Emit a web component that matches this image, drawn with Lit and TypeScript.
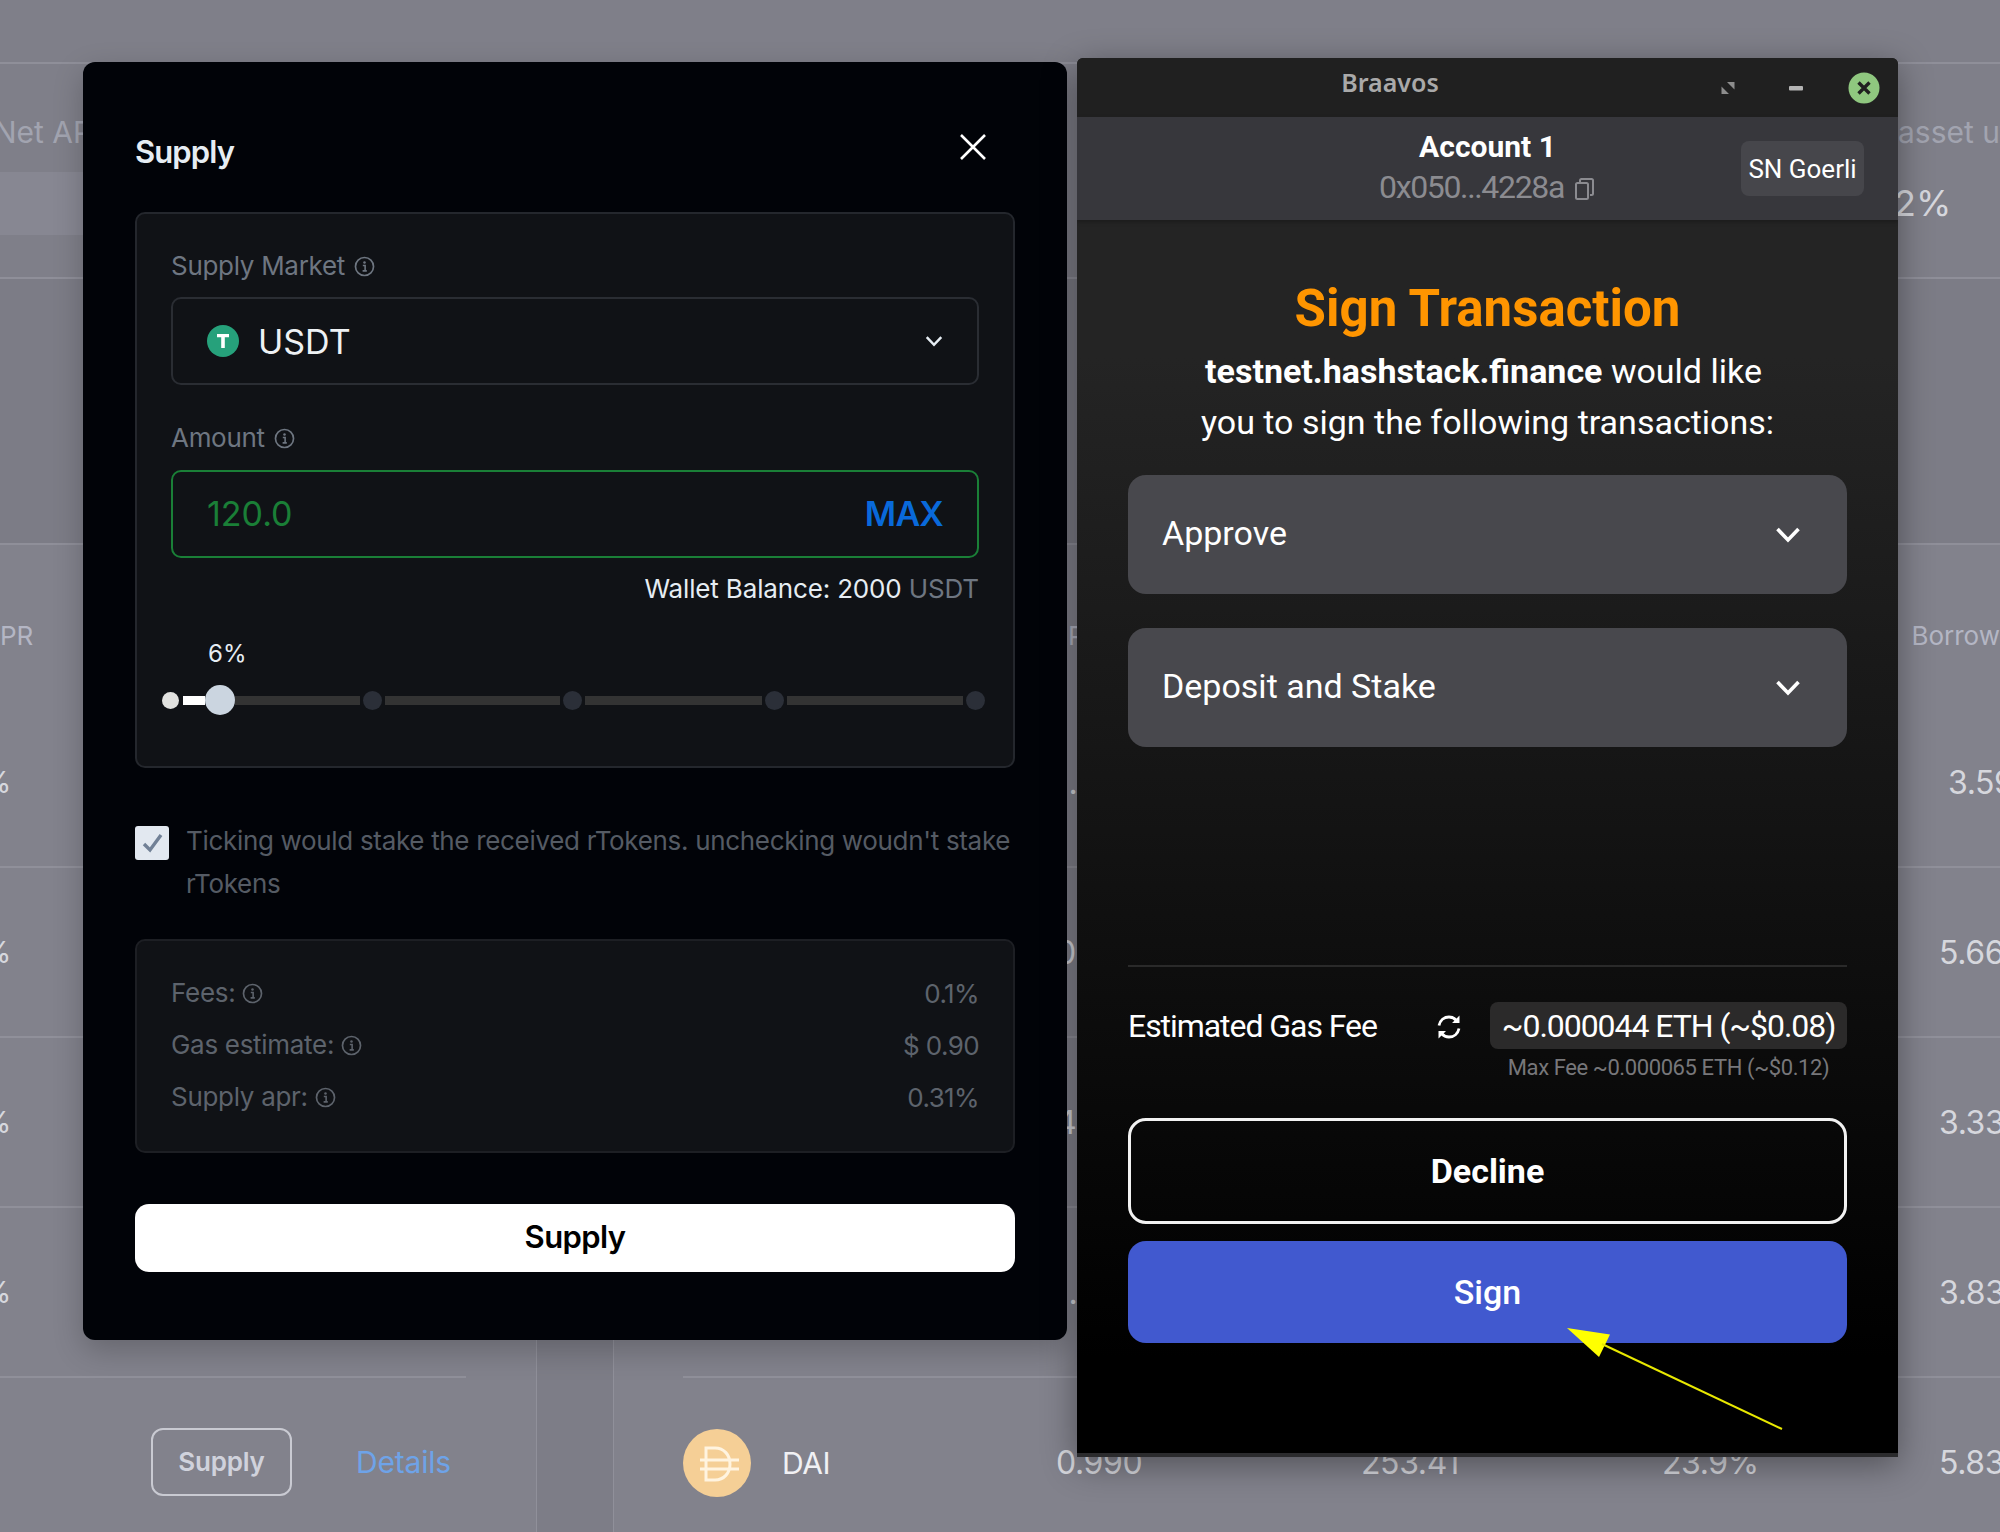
import { LitElement, css, html, svg } from "lit";
import { customElement } from "lit/decorators.js";

const infoIcon = html`<svg class="info" viewBox="0 0 20 20">
  <circle cx="10" cy="10" r="8.6" fill="none" stroke="currentColor" stroke-width="1.6"></circle>
  <circle cx="10" cy="6.2" r="1.2" fill="currentColor"></circle>
  <path d="M8.4 9h2.2v5M8.2 14.2h4" fill="none" stroke="currentColor" stroke-width="1.5"></path>
</svg>`;

const chevron = html`<svg class="chev" viewBox="0 0 26 17">
  <path d="M2.5 3 13 14 23.5 3" fill="none" stroke="currentColor" stroke-width="3.6"></path>
</svg>`;

const sliderSegments = [125, 175, 177, 176];

@customElement("app-root")
export class AppRoot extends LitElement {
  static styles = css`
    :host {
      display: block;
      position: relative;
      width: 2000px;
      height: 1532px;
      overflow: hidden;
      background: #82828c;
      font-family: Inter, "Liberation Sans", sans-serif;
    }

    /* dimmed dashboard behind the dialogs */
    .page {
      display: flex;
      flex-direction: column;
      height: 100%;
      color: #d6d7dd;
    }
    .top-strip {
      height: 62px;
      flex: none;
      background: #7f7f89;
      border-bottom: 2px solid #8f8f99;
    }
    .stats {
      height: 213px;
      flex: none;
      display: flex;
      justify-content: space-between;
      background: #7f7f89;
      border-bottom: 2px solid #8f8f99;
    }
    .stat-left {
      width: 90px;
      overflow: hidden;
      padding-top: 50px;
      white-space: nowrap;
      font-size: 30px;
      line-height: 36px;
      color: #a2a4b0;
    }
    .stat-left span {
      display: block;
      margin-left: -6px;
    }
    .skeleton {
      height: 63px;
      margin-top: 22px;
      background: #878792;
    }
    .stat-right {
      width: 102px;
      overflow: hidden;
      padding-top: 50px;
      white-space: nowrap;
      font-size: 30px;
      line-height: 36px;
      color: #a2a4b0;
    }
    .stat-value {
      margin: 30px 0 0 -4px;
      font-size: 36px;
      line-height: 46px;
      color: #d6d7dd;
    }
    .band {
      height: 264px;
      flex: none;
      background: #7c7c86;
      border-bottom: 2px solid #8f8f99;
    }
    .tables {
      flex: 1;
      display: flex;
    }
    .left-table {
      width: 536px;
      flex: none;
      border-right: 1px solid #90909a;
      overflow: hidden;
    }
    .gutter {
      width: 76px;
      flex: none;
      background: #7d7d87;
    }
    .right-table {
      flex: 1;
      border-left: 1px solid #90909a;
      padding-left: 69px;
      overflow: hidden;
    }
    .head {
      height: 153px;
      padding-top: 73px;
      box-sizing: border-box;
      font-size: 26px;
      line-height: 36px;
      color: #b4b6c4;
      white-space: nowrap;
    }
    .left-row {
      height: 170px;
      width: 466px;
      box-sizing: border-box;
      border-bottom: 2px solid #90909a;
      display: flex;
      align-items: center;
      font-size: 30px;
    }
    .clip-pct {
      margin-left: -18px;
      color: #d6d7dd;
    }
    .head .clip-pct {
      color: #b4b6c4;
    }
    .action-row {
      height: 154px;
      padding: 50px 0 0 151px;
      box-sizing: border-box;
      display: flex;
    }
    .ghost-btn {
      width: 141px;
      height: 68px;
      padding-bottom: 2px;
      box-sizing: border-box;
      border: 2px solid #c9cad2;
      border-radius: 12px;
      display: flex;
      align-items: center;
      justify-content: center;
      font-size: 26px;
      font-weight: 600;
      letter-spacing: -0.2px;
      color: #d0d2dc;
    }
    .details {
      margin-left: 64px;
      line-height: 68px;
      font-size: 30px;
      letter-spacing: -0.2px;
      color: #6ea3e8;
    }
    .right-row {
      height: 170px;
      box-sizing: border-box;
      border-bottom: 2px solid #90909a;
      display: grid;
      grid-template-columns: 373px 305px 301px 277px auto;
      align-items: center;
      font-size: 32px;
      letter-spacing: -0.4px;
      white-space: nowrap;
    }
    .right-row.last {
      border-bottom: 0;
      height: 168px;
      padding-bottom: 2px;
      align-items: start;
      padding-top: 51px;
    }
    .right-row.last > * {
      line-height: 68px;
    }
    .right-row .shift {
      padding-left: 9px;
    }
    .asset {
      display: flex;
      align-items: center;
      gap: 31px;
      font-size: 30px;
      color: #f1f1f4;
    }
    .asset svg {
      width: 68px;
      height: 68px;
    }
    .borrow-head {
      margin-left: 1158px;
    }
    .price-head {
      position: relative;
      left: 385px;
    }

    /* Supply dialog */
    .modal {
      position: absolute;
      left: 83px;
      top: 62px;
      width: 984px;
      height: 1278px;
      box-sizing: border-box;
      padding: 70px 52px 0;
      background: #010308;
      border-radius: 12px;
      box-shadow: 0 10px 30px rgba(0, 0, 0, 0.22);
      color: #e6edf3;
    }
    .modal-head {
      display: flex;
      align-items: center;
      justify-content: space-between;
      padding-right: 28px;
      font-size: 31px;
      font-weight: 600;
      letter-spacing: -0.9px;
      line-height: 40px;
    }
    .close {
      width: 28px;
      height: 28px;
      margin-top: -10px;
    }
    .card {
      margin-top: 40px;
      box-sizing: border-box;
      border: 2px solid #24272d;
      border-radius: 10px;
      background: #101216;
    }
    .market {
      height: 556px;
      padding: 34px 34px 0;
    }
    .label {
      display: flex;
      align-items: center;
      gap: 9px;
      font-size: 26px;
      letter-spacing: -0.3px;
      line-height: 36px;
      color: #6e7681;
    }
    .info {
      width: 21px;
      height: 21px;
      flex: none;
      color: #6e7681;
    }
    .select,
    .amount {
      height: 88px;
      box-sizing: border-box;
      border-radius: 10px;
      display: flex;
      align-items: center;
      padding: 0 34px;
      font-size: 34px;
    }
    .select {
      margin-top: 13px;
      border: 2px solid #2a2d33;
      gap: 19px;
      color: #eef1f4;
    }
    .select .coin {
      width: 32px;
      height: 32px;
    }
    .select .chev {
      margin-left: auto;
      width: 18px;
      height: 12px;
      color: #e6edf3;
    }
    .amount-label {
      margin-top: 35px;
    }
    .amount {
      margin-top: 14px;
      padding-bottom: 2px;
      border: 2px solid #1a7f37;
      justify-content: space-between;
      color: #1a7f37;
    }
    .max {
      font-weight: 600;
      letter-spacing: -0.8px;
      color: #0969da;
    }
    .balance {
      margin-top: 13px;
      text-align: right;
      font-size: 26px;
      letter-spacing: -0.15px;
      line-height: 36px;
    }
    .balance span {
      color: #6e7681;
    }
    .pct {
      margin: 32px 0 0 37px;
      font-size: 24px;
      line-height: 30px;
    }
    .slider {
      display: flex;
      align-items: center;
      height: 30px;
      margin: 16px -7px 0 -9px;
    }
    .slider .dot {
      width: 19px;
      height: 19px;
      flex: none;
      border-radius: 50%;
      background: #2b2f38;
    }
    .slider .dot.on {
      width: 17px;
      height: 17px;
      background: #e2e2e0;
      margin-right: 4px;
    }
    .slider .fill {
      width: 22px;
      height: 9px;
      background: #ffffff;
    }
    .slider .thumb {
      width: 30px;
      height: 30px;
      flex: none;
      border-radius: 50%;
      background: #cbd5e0;
    }
    .slider .seg {
      height: 9px;
      flex: none;
      background: #333333;
      margin-right: 3px;
    }
    .slider .dot + .seg {
      margin-left: 3px;
    }
    .stake {
      display: flex;
      gap: 17px;
      margin-top: 51px;
      font-size: 26px;
      letter-spacing: -0.32px;
      line-height: 43px;
      color: #555b64;
    }
    .check {
      width: 34px;
      height: 34px;
      flex: none;
      margin-top: 7px;
      border-radius: 3px;
      background: #e2e8f0;
      display: block;
    }
    .fees {
      margin-top: 34px;
      height: 214px;
      padding: 26px 34px 0;
      border-color: #1d1f24;
    }
    .fee-row {
      display: flex;
      justify-content: space-between;
      align-items: center;
      height: 52px;
      font-size: 26px;
      letter-spacing: -0.6px;
      color: #5d636c;
    }
    .fee-row .label {
      gap: 7px;
      color: #5d636c;
    }
    .fee-row .info {
      color: #5d636c;
    }
    .submit {
      margin-top: 51px;
      height: 68px;
      padding-bottom: 3px;
      box-sizing: border-box;
      border-radius: 14px;
      background: #ffffff;
      color: #000000;
      display: flex;
      align-items: center;
      justify-content: center;
      font-size: 31px;
      font-weight: 600;
      letter-spacing: -0.6px;
    }

    /* Braavos wallet popup */
    .wallet {
      position: absolute;
      left: 1077px;
      top: 58px;
      width: 821px;
      height: 1399px;
      box-sizing: border-box;
      display: flex;
      flex-direction: column;
      border-radius: 6px 6px 0 0;
      border-bottom: 4px solid #2b2b2d;
      box-shadow: 0 8px 34px rgba(0, 0, 0, 0.38);
      background: linear-gradient(#242424 300px, #000000 1300px);
      font-family: Roboto, "Liberation Sans", sans-serif;
      color: #ffffff;
      overflow: hidden;
    }
    .titlebar {
      height: 59px;
      flex: none;
      position: relative;
      background: #202020;
      font-family: "Noto Sans", Roboto, sans-serif;
      font-size: 25px;
      font-weight: 600;
      line-height: 48px;
      color: #a9a9a9;
    }
    .titlebar .name {
      display: block;
      width: 626px;
      text-align: center;
    }
    .win-buttons {
      position: absolute;
      top: 14px;
      right: 18px;
      display: flex;
      align-items: center;
      gap: 45px;
    }
    .win-buttons svg {
      display: block;
    }
    .win-buttons .restore {
      margin-right: 9px;
    }
    .account {
      height: 103px;
      flex: none;
      display: grid;
      grid-template-columns: 1fr auto 1fr;
      align-items: center;
      background: #37373c;
      box-shadow: 0 2px 4px rgba(0, 0, 0, 0.25);
      position: relative;
    }
    .who {
      grid-column: 2;
      text-align: center;
      margin-top: -3px;
    }
    .who b {
      display: block;
      font-size: 30px;
      font-weight: 700;
      line-height: 40px;
    }
    .addr {
      display: flex;
      align-items: center;
      gap: 9px;
      font-size: 32px;
      letter-spacing: -1.35px;
      line-height: 40px;
      color: #8b8b90;
    }
    .addr svg {
      width: 23px;
      height: 24px;
      margin-top: 4px;
    }
    .net {
      grid-column: 3;
      justify-self: end;
      margin-right: 34px;
      width: 123px;
      height: 55px;
      border-radius: 8px;
      background: #46464b;
      display: flex;
      align-items: center;
      justify-content: center;
      font-size: 26px;
    }
    .body {
      padding: 61px 51px 0;
    }
    h1 {
      margin: 0;
      text-align: center;
      font-size: 51px;
      font-weight: 700;
      line-height: 56px;
      color: #ff9500;
    }
    .ask {
      margin: 9px 0 0;
      text-align: center;
      font-size: 34px;
      line-height: 51px;
    }
    .ask .lead {
      padding-right: 8px;
    }
    .tx {
      height: 119px;
      margin-top: 34px;
      padding: 0 34px 4px;
      box-sizing: border-box;
      border-radius: 18px;
      background: #48484d;
      display: flex;
      align-items: center;
      justify-content: space-between;
      font-size: 34px;
    }
    .tx.first {
      margin-top: 27px;
    }
    .tx .chev {
      width: 26px;
      height: 17px;
      margin: 4px 12px 0 0;
    }
    .divider {
      margin-top: 218px;
      height: 2px;
      background: #2a2a2a;
    }
    .gas {
      margin-top: 35px;
      display: flex;
      align-items: center;
      font-size: 32px;
      letter-spacing: -1.05px;
    }
    .gas .refresh {
      width: 28px;
      height: 28px;
      margin: 2px 27px 0 auto;
    }
    .gas .pill {
      width: 357px;
      height: 47px;
      border-radius: 8px;
      background: #2b2a2a;
      display: flex;
      align-items: center;
      justify-content: center;
      white-space: nowrap;
    }
    .max-fee {
      margin-top: 4px;
      width: 357px;
      margin-left: auto;
      text-align: center;
      font-size: 22px;
      letter-spacing: -0.4px;
      line-height: 30px;
      color: #77777a;
      white-space: nowrap;
    }
    .btn {
      display: flex;
      align-items: center;
      justify-content: center;
      box-sizing: border-box;
      border-radius: 18px;
      font-size: 34px;
      font-weight: 700;
    }
    .decline {
      margin-top: 35px;
      height: 106px;
      border: 3px solid #f2f2f2;
    }
    .sign {
      margin-top: 17px;
      height: 102px;
      background: #4159cf;
      font-weight: 500;
    }

    .arrow {
      position: absolute;
      left: 1540px;
      top: 1310px;
      width: 260px;
      height: 135px;
    }
  `;

  renderTitleButtons() {
    return html`<div class="win-buttons">
      <svg class="restore" width="14" height="14" viewBox="0 0 14 14">
        <path d="M6 1h7.5v7.5zM8 13H.5V5.500z" fill="#8d8d8d"></path>
      </svg>
      <svg width="14" height="5" viewBox="0 0 14 5">
        <rect width="14" height="4.500" rx="1" fill="#b4b4b4"></rect>
      </svg>
      <svg width="32" height="32" viewBox="0 0 32 32">
        <circle cx="16" cy="16" r="15.500" fill="#8fc77f"></circle>
        <path d="m10.500 10.500 11 11m0-11-11 11" stroke="#202020" stroke-width="3.4" fill="none"></path>
      </svg>
    </div>`;
  }

  renderBackdrop() {
    const leftRows = [0, 1, 2, 3];
    const rightRows = [
      ["1.001", "3.59", true],
      ["0.999", "5.66", false],
      ["4.001", "3.33", false],
      ["1.000", "3.83", false],
    ];
    return html`<div class="page">
      <div class="top-strip"></div>
      <div class="stats">
        <div class="stat-left">
          <span>Net APR</span>
          <div class="skeleton"></div>
        </div>
        <div class="stat-right">
          <span>asset ut</span>
          <div class="stat-value">2%</div>
        </div>
      </div>
      <div class="band"></div>
      <div class="tables">
        <div class="left-table">
          <div class="head"><span class="clip-pct">APR</span></div>
          ${leftRows.map(() => html`<div class="left-row"><span class="clip-pct">%</span></div>`)}
          <div class="action-row">
            <div class="ghost-btn">Supply</div>
            <div class="details">Details</div>
          </div>
        </div>
        <div class="gutter"></div>
        <div class="right-table">
          <div class="head">
            <span class="price-head">Price</span>
            <span class="borrow-head">Borrow</span>
          </div>
          ${rightRows.map(
            ([price, rate, shift]) => html`<div class="right-row">
              <span></span>
              <span>${price}</span>
              <span></span>
              <span></span>
              <span class=${shift ? "shift" : ""}>${rate}</span>
            </div>`,
          )}
          <div class="right-row last">
            <div class="asset">
              <svg viewBox="0 0 68 68">
                <circle cx="34" cy="34" r="34" fill="#f5cf96"></circle>
                <path
                  d="M23 19h9c9 0 15 7 15 16s-6 16-15 16h-9zM17 31h39M17 40h39"
                  fill="none"
                  stroke="#fff4e0"
                  stroke-width="3"
                ></path>
              </svg>
              DAI
            </div>
            <span>0.990</span>
            <span>253.41</span>
            <span>23.9%</span>
            <span>5.83</span>
          </div>
        </div>
      </div>
    </div>`;
  }

  renderSlider() {
    return html`<div class="slider">
      <span class="dot on"></span>
      <span class="fill"></span>
      <span class="thumb"></span>
      ${sliderSegments.map(
        (w) => html`<span class="seg" style="width:${w}px"></span><span class="dot"></span>`,
      )}
    </div>`;
  }

  renderSupply() {
    return html`<section class="modal">
      <div class="modal-head">
        Supply
        <svg class="close" viewBox="0 0 28 28">
          <path d="m2 2 24 24M26 2 2 26" stroke="#ffffff" stroke-width="2.600" fill="none"></path>
        </svg>
      </div>
      <div class="card market">
        <div class="label">Supply Market ${infoIcon}</div>
        <div class="select">
          <svg class="coin" viewBox="0 0 32 32">
            <circle cx="16" cy="16" r="16" fill="#26a17b"></circle>
            <path d="M10 9h12v3.200h-4.200V23h-3.600V12.200H10z" fill="#ffffff"></path>
          </svg>
          USDT ${chevron}
        </div>
        <div class="label amount-label">Amount ${infoIcon}</div>
        <div class="amount">
          <span>120.0</span>
          <span class="max">MAX</span>
        </div>
        <div class="balance">Wallet Balance: 2000 <span>USDT</span></div>
        <div class="pct">6%</div>
        ${this.renderSlider()}
      </div>
      <div class="stake">
        <svg class="check" viewBox="0 0 34 34">
          <path d="m9 18 6 6L26 9" fill="none" stroke="#718096" stroke-width="3.400"></path>
        </svg>
        <span>Ticking would stake the received rTokens. unchecking woudn't stake rTokens</span>
      </div>
      <div class="card fees">
        <div class="fee-row"><div class="label">Fees: ${infoIcon}</div><span>0.1%</span></div>
        <div class="fee-row"><div class="label">Gas estimate: ${infoIcon}</div><span>$ 0.90</span></div>
        <div class="fee-row"><div class="label">Supply apr: ${infoIcon}</div><span>0.31%</span></div>
      </div>
      <div class="submit">Supply</div>
    </section>`;
  }

  renderWallet() {
    return html`<section class="wallet">
      <div class="titlebar">
        <span class="name">Braavos</span>
        ${this.renderTitleButtons()}
      </div>
      <div class="account">
        <div class="who">
          <b>Account 1</b>
          <div class="addr">
            0x050...4228a
            <svg viewBox="0 0 23 24">
              <path
                d="M7 5V3.500C7 2.500 7.500 2 8.500 2h10c1 0 1.500.5 1.500 1.500v13c0 1-.5 1.500-1.500 1.500H17M4.500 6h9c1 0 1.500.5 1.500 1.500v13c0 1-.5 1.500-1.500 1.500h-9C3.500 22 3 21.500 3 20.500v-13C3 6.500 3.500 6 4.500 6z"
                fill="none"
                stroke="#8b8b90"
                stroke-width="2"
              ></path>
            </svg>
          </div>
        </div>
        <div class="net">SN Goerli</div>
      </div>
      <div class="body">
        <h1>Sign Transaction</h1>
        <p class="ask">
          <span class="lead"><b>testnet.hashstack.finance</b> would like</span><br />you to sign the
          following transactions:
        </p>
        <div class="tx first">Approve ${chevron}</div>
        <div class="tx">Deposit and Stake ${chevron}</div>
        <div class="divider"></div>
        <div class="gas">
          Estimated Gas Fee
          <svg class="refresh" viewBox="0 0 28 28">
            <path
              d="M4 12.500C5 7.500 9 4 14 4c3 0 5.500 1.200 7.500 3.500M24 15.500C23 20.500 19 24 14 24c-3 0-5.500-1.200-7.500-3.500"
              fill="none"
              stroke="#ffffff"
              stroke-width="2.800"
            ></path>
            <path d="M24.500 2.500v7.500H17zM3.500 25.500V18H11z" fill="#ffffff"></path>
          </svg>
          <div class="pill">~0.000044 ETH (~$0.08)</div>
        </div>
        <div class="max-fee">Max Fee ~0.000065 ETH (~$0.12)</div>
        <div class="btn decline">Decline</div>
        <div class="btn sign">Sign</div>
      </div>
    </section>`;
  }

  render() {
    return html`
      ${this.renderBackdrop()} ${this.renderSupply()} ${this.renderWallet()}
      <svg class="arrow" viewBox="0 0 260 135">
        ${svg`<path d="M27 18 70 24.500 59 47z" fill="#ffff00"></path>
        <path d="M62 34 242 119" stroke="#e8e800" stroke-width="2" fill="none"></path>`}
      </svg>
    `;
  }
}
